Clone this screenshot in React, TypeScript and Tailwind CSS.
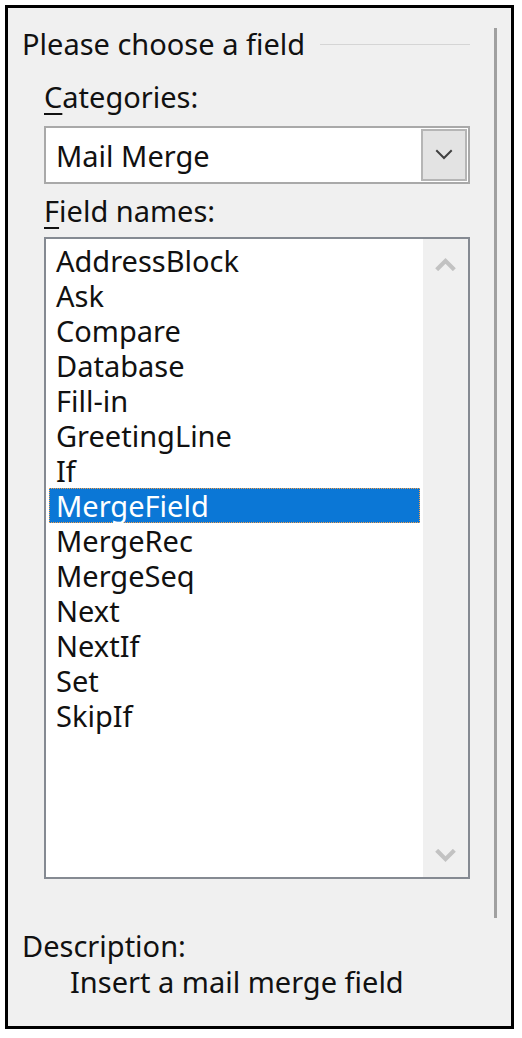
const fields = [
  'AddressBlock',
  'Ask',
  'Compare',
  'Database',
  'Fill-in',
  'GreetingLine',
  'If',
  'MergeField',
  'MergeRec',
  'MergeSeq',
  'Next',
  'NextIf',
  'Set',
  'SkipIf',
];

const font = { fontFamily: '"Noto Sans", "Open Sans", sans-serif' };

function Chevron({ up, className }: { up?: boolean; className: string }) {
  return (
    <svg viewBox="0 0 20 12" className={className} fill="none" stroke="currentColor" strokeLinecap="square">
      {up ? <path d="M3 10 L10 3 L17 10" /> : <path d="M3 2 L10 9 L17 2" />}
    </svg>
  );
}

export default function App() {
  const selected = 'MergeField';

  return (
    <div className="w-[522px] h-[1038px] bg-white pt-[5px] pl-[5px] text-[#111]" style={font}>
      <div className="w-[509px] h-[1024px] border-[3px] border-black bg-[#f0f0f0] flex flex-col">
        <div className="flex h-[910px]">
          <div className="flex-1 flex flex-col pl-[14px] pr-[24px] pt-[18px]">
            <div className="flex items-center h-[35px]">
              <span className="text-[29px] leading-[35px]">Please choose a field</span>
              <div className="flex-1 h-px bg-[#d5d5d5] ml-[15px] mt-[2px]" />
            </div>

            <div className="ml-[22px] mt-[18px] text-[29px] leading-[35px]">
              <span className="underline decoration-2 underline-offset-[5px]">C</span>ategories:
            </div>

            <div className="ml-[22px] mt-[12px] h-[58px] border-2 border-[#a9a9a9] bg-white flex">
              <div className="flex-1 pl-[10px] flex items-center text-[29px] leading-[35px]">Mail Merge</div>
              <div className="w-[46px] bg-[#e3e3e3] border-2 border-[#b5b5b5] flex items-center justify-center m-[1px]">
                <Chevron className="w-[20px] h-[12px] text-[#404040] stroke-[2]" />
              </div>
            </div>

            <div className="ml-[22px] mt-[9px] text-[29px] leading-[35px]">
              <span className="underline decoration-2 underline-offset-[5px]">F</span>ield names:
            </div>

            <div className="ml-[22px] mt-[9px] h-[642px] border-2 border-[#858a92] bg-white flex">
              <div className="flex-1 flex flex-col pt-[4px] pl-[3px] pr-[3px]">
                {fields.map((f) =>
                  f === selected ? (
                    <div
                      key={f}
                      className="h-[35px] bg-[#0b77d6] text-white border border-dotted border-[#f4a04a] pl-[6px] text-[29px] leading-[33px]"
                    >
                      {f}
                    </div>
                  ) : (
                    <div key={f} className="h-[35px] pl-[7px] text-[29px] leading-[35px]">
                      {f}
                    </div>
                  )
                )}
              </div>
              <div className="w-[45px] bg-[#f0f0f0] flex flex-col items-center justify-between pt-[18px] pb-[14px]">
                <Chevron up className="w-[21px] h-[14px] text-[#c2c2c2] stroke-[4]" />
                <Chevron className="w-[21px] h-[14px] text-[#c2c2c2] stroke-[4]" />
              </div>
            </div>
          </div>
          <div className="w-[3px] bg-[#a0a0a0] mt-[20px] mr-[14px]" />
        </div>

        <div className="mt-[10px] pl-[14px] text-[29px] leading-[36px]">Description:</div>
        <div className="pl-[62px] text-[29px] leading-[36px]">Insert a mail merge field</div>
      </div>
    </div>
  );
}
